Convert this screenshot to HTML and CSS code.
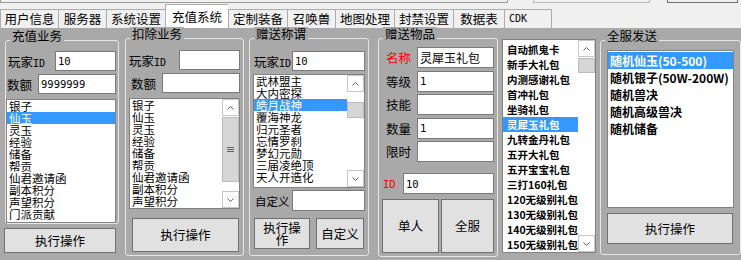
FILE: index.html
```html
<!DOCTYPE html>
<html lang="zh-CN">
<head>
    <meta charset="UTF-8">
    <title>GM工具 - 充值系统</title>
    <link rel="stylesheet" href="styles.css">
</head>
<body>
    <!-- 上方被截掉的控件 -->
    <div class="top-strip">
        <div class="strip-box box-a"></div>
        <div class="strip-box box-b"></div>
        <div class="strip-box box-c"></div>
    </div>

    <!-- 选项卡 -->
    <div class="tabs">
        <div class="tab tab-first">用户信息</div>
        <div class="tab tab-short">服务器</div>
        <div class="tab">系统设置</div>
        <div class="tab tab-active">充值系统</div>
        <div class="tab">定制装备</div>
        <div class="tab tab-short">召唤兽</div>
        <div class="tab">地图处理</div>
        <div class="tab">封禁设置</div>
        <div class="tab tab-mid">数据表</div>
        <div class="tab tab-short tab-last tab-cdk">CDK</div>
    </div>

    <div class="panel">
        <!-- 充值业务 -->
        <div class="col col-recharge">
            <div class="group g-recharge">
                <span class="group-title">充值业务</span>
                <div class="field f-id">
                    <label>玩家<span class="en">ID</span></label>
                    <input type="text" value="10">
                </div>
                <div class="field f-amt">
                    <label>数额</label>
                    <input type="text" value="9999999">
                </div>
                <div class="list">
                    <div class="items">
                        <div class="item">银子</div>
                        <div class="item sel">仙玉</div>
                        <div class="item">灵玉</div>
                        <div class="item">经验</div>
                        <div class="item">储备</div>
                        <div class="item">帮贡</div>
                        <div class="item">仙君邀请函</div>
                        <div class="item">副本积分</div>
                        <div class="item">声望积分</div>
                        <div class="item">门派贡献</div>
                    </div>
                </div>
            </div>
            <button class="btn">执行操作</button>
        </div>

        <!-- 扣除业务 -->
        <div class="col col-deduct">
            <div class="group g-deduct">
                <span class="group-title">扣除业务</span>
                <div class="field f-id">
                    <label>玩家<span class="en">ID</span></label>
                    <input type="text" value="">
                </div>
                <div class="field f-amt">
                    <label>数额</label>
                    <input type="text" value="">
                </div>
                <div class="list">
                    <div class="items">
                        <div class="item">银子</div>
                        <div class="item">仙玉</div>
                        <div class="item">灵玉</div>
                        <div class="item">经验</div>
                        <div class="item">储备</div>
                        <div class="item">帮贡</div>
                        <div class="item">仙君邀请函</div>
                        <div class="item">副本积分</div>
                        <div class="item">声望积分</div>
                    </div>
                    <div class="scroll">
                        <div class="arrow">
                            <svg width="7" height="4" viewBox="0 0 7 4"><polyline points="0.5,3.5 3.5,0.5 6.5,3.5" fill="none" stroke="#606060"/></svg>
                        </div>
                        <div class="thumb thumb-big">
                            <svg width="7" height="5" viewBox="0 0 7 5"><path d="M0 0.5H7M0 2.5H7M0 4.5H7" stroke="#606060"/></svg>
                        </div>
                        <div class="track"></div>
                        <div class="arrow">
                            <svg width="7" height="4" viewBox="0 0 7 4"><polyline points="0.5,0.5 3.5,3.5 6.5,0.5" fill="none" stroke="#606060"/></svg>
                        </div>
                    </div>
                </div>
                <button class="btn">执行操作</button>
            </div>
        </div>

        <!-- 赠送称谓 -->
        <div class="col col-title">
            <div class="group g-title">
                <span class="group-title">赠送称谓</span>
                <div class="field f-id">
                    <label>玩家<span class="en">ID</span></label>
                    <input type="text" value="10">
                </div>
                <div class="list">
                    <div class="items">
                        <div class="item">武林盟主</div>
                        <div class="item">大内密探</div>
                        <div class="item sel">皓月战神</div>
                        <div class="item">覆海神龙</div>
                        <div class="item">归元圣者</div>
                        <div class="item">忘情罗刹</div>
                        <div class="item">梦幻元勋</div>
                        <div class="item">三届凌绝顶</div>
                        <div class="item">天人开造化</div>
                    </div>
                    <div class="scroll">
                        <div class="arrow">
                            <svg width="7" height="4" viewBox="0 0 7 4"><polyline points="0.5,3.5 3.5,0.5 6.5,3.5" fill="none" stroke="#606060"/></svg>
                        </div>
                        <div class="thumb thumb-mid"></div>
                        <div class="track"></div>
                        <div class="arrow">
                            <svg width="7" height="4" viewBox="0 0 7 4"><polyline points="0.5,0.5 3.5,3.5 6.5,0.5" fill="none" stroke="#606060"/></svg>
                        </div>
                    </div>
                </div>
                <div class="field f-custom">
                    <label>自定义</label>
                    <input type="text" value="">
                </div>
                <div class="btn-row">
                    <button class="btn btn-wrap">执行操作</button>
                    <button class="btn btn-custom">自定义</button>
                </div>
            </div>
        </div>

        <!-- 赠送物品 -->
        <div class="col col-item">
            <div class="group g-item">
                <span class="group-title">赠送物品</span>
                <div class="field">
                    <label class="red">名称</label>
                    <input type="text" class="cn" value="灵犀玉礼包">
                </div>
                <div class="field">
                    <label>等级</label>
                    <input type="text" value="1">
                </div>
                <div class="field">
                    <label>技能</label>
                    <input type="text" value="">
                </div>
                <div class="field">
                    <label>数量</label>
                    <input type="text" value="1">
                </div>
                <div class="field">
                    <label>限时</label>
                    <input type="text" value="">
                </div>
                <div class="field f-itemid">
                    <label class="red en">ID</label>
                    <input type="text" value="10">
                </div>
                <div class="btn-row">
                    <button class="btn btn-single">单人</button>
                    <button class="btn btn-server">全服</button>
                </div>
            </div>
        </div>

        <!-- 物品列表 -->
        <div class="list list-gift">
            <div class="items">
                <div class="item">自动抓鬼卡</div>
                <div class="item">新手大礼包</div>
                <div class="item">内测感谢礼包</div>
                <div class="item">首冲礼包</div>
                <div class="item">坐骑礼包</div>
                <div class="item sel">灵犀玉礼包</div>
                <div class="item">九转金丹礼包</div>
                <div class="item">五开大礼包</div>
                <div class="item">五开宝宝礼包</div>
                <div class="item">三打160礼包</div>
                <div class="item">120无级别礼包</div>
                <div class="item">130无级别礼包</div>
                <div class="item">140无级别礼包</div>
                <div class="item">150无级别礼包</div>
            </div>
            <div class="scroll">
                <div class="arrow">
                    <svg width="7" height="4" viewBox="0 0 7 4"><polyline points="0.5,3.5 3.5,0.5 6.5,3.5" fill="none" stroke="#606060"/></svg>
                </div>
                <div class="thumb thumb-small"></div>
                <div class="track"></div>
                <div class="arrow">
                    <svg width="7" height="4" viewBox="0 0 7 4"><polyline points="0.5,0.5 3.5,3.5 6.5,0.5" fill="none" stroke="#606060"/></svg>
                </div>
            </div>
        </div>

        <!-- 全服发送 -->
        <div class="col col-all">
            <div class="group g-all">
                <span class="group-title">全服发送</span>
                <div class="list">
                    <div class="items">
                        <div class="item sel">随机仙玉(50-500)</div>
                        <div class="item">随机银子(50W-200W)</div>
                        <div class="item">随机兽决</div>
                        <div class="item">随机高级兽决</div>
                        <div class="item">随机储备</div>
                    </div>
                </div>
                <button class="btn">执行操作</button>
            </div>
        </div>
    </div>
</body>
</html>
```

FILE: styles.css
```css
* {
    box-sizing: border-box;
}

body {
    margin: 0;
    width: 741px;
    height: 260px;
    overflow: hidden;
    background: #f0f0f0;
    font-family: "Noto Sans CJK SC", sans-serif;
    font-size: 12.5px;
    color: #000;
}

.en {
    font-family: "DejaVu Sans Mono", monospace;
    font-size: 10px;
}

.red {
    color: #ff0000;
}

/* 顶部残留控件 */
.top-strip {
    display: flex;
    height: 4px;
}

.strip-box {
    height: 3px;
    border: 1px solid #9b9b9b;
    border-top: none;
}

.box-a { width: 508px; }
.box-b { width: 117px; margin-left: 25px; border-color: #b6beb6; }
.box-c { width: 71px; margin-left: 17px; border-color: #6e6e6e; }

/* 选项卡 */
.tabs {
    display: flex;
    align-items: flex-end;
    height: 24px;
}

.tab {
    width: 59px;
    height: 19px;
    border: 1px solid #acacac;
    border-right: none;
    border-bottom: none;
    background: #f0f0f0;
    text-align: center;
    line-height: 17px;
    white-space: nowrap;
}

.tab-first { width: 58px; }
.tab-short { width: 48px; }
.tab-mid { width: 51px; }
.tab-last { border-right: 1px solid #acacac; }

.tab-active {
    width: 63px;
    height: 24px;
    padding-top: 3px;
    background: #fff;
}

.tab-cdk {
    text-align: left;
    padding-left: 4px;
    font-family: "DejaVu Sans Mono", monospace;
    font-size: 10px;
}

/* 主面板 */
.panel {
    display: flex;
    align-items: flex-start;
    height: 232px;
    background: #a9a9a9;
}

.col {
    display: flex;
    flex-direction: column;
    align-items: flex-start;
}

.group {
    position: relative;
    border: 1px solid #e6e6e6;
    border-radius: 3px;
}

.group-title {
    position: absolute;
    top: -12px;
    left: 4px;
    padding: 0 2px;
    background: #a9a9a9;
    line-height: 14px;
    white-space: nowrap;
}

.field {
    display: flex;
    align-items: center;
}

.field label {
    white-space: nowrap;
}

.field input {
    margin-left: auto;
}

input {
    height: 20px;
    border: 1px solid #7a7a7a;
    background: #fff;
    padding: 0 2px;
    font-family: "DejaVu Sans Mono", "Noto Sans CJK SC", monospace;
    font-size: 10.5px;
    color: #000;
    outline: none;
}

input.cn {
    font-family: "Noto Sans CJK SC", sans-serif;
    font-size: 12px;
}

.btn {
    background: #e1e1e1;
    border: 1px solid #707070;
    font-family: inherit;
    font-size: 12.5px;
    line-height: 12px;
    color: #000;
    padding: 0;
}

.btn-row {
    display: flex;
}

/* 列表框 */
.list {
    display: flex;
    background: #fff;
    border: 1px solid #828282;
    overflow: hidden;
}

.items {
    flex: 1;
    overflow: hidden;
}

.item {
    height: 12px;
    padding-left: 2px;
    font-size: 11.5px;
    line-height: 12px;
    white-space: nowrap;
}

.item.sel {
    background: #3399ff;
    color: #fff;
}

.scroll {
    width: 17px;
    display: flex;
    flex-direction: column;
}

.arrow {
    height: 17px;
    border: 1px solid #c6c6c6;
    background: #fff;
    display: flex;
    align-items: center;
    justify-content: center;
}

.arrow svg {
    display: block;
}

.thumb {
    border: 1px solid #bcbcbc;
    background: #d6d6d6;
    display: flex;
    align-items: center;
    justify-content: center;
}

.thumb-big { margin-top: 1px; height: 65px; }
.thumb-mid { margin-top: 10px; height: 16px; }
.thumb-small { margin-top: 1px; height: 15px; }

.track {
    flex: 1;
}

/* 充值业务 */
.col-recharge {
    margin: 12px 0 0 4px;
    width: 115px;
}

.g-recharge {
    margin-left: 1px;
    width: 114px;
    height: 184px;
    padding: 10px 2px 0 0;
}

.g-recharge .f-id label { margin-left: 2px; }
.g-recharge .f-id input { width: 61px; }
.g-recharge .f-amt { margin-top: 3px; }
.g-recharge .f-amt label { margin-left: 1px; }
.g-recharge .f-amt input { width: 78px; }

.g-recharge .list {
    margin-top: 5px;
    width: 110px;
    height: 124px;
}

.col-recharge > .btn {
    margin-top: 4px;
    width: 112px;
    height: 25px;
}

/* 扣除业务 */
.col-deduct {
    margin: 10px 0 0 6px;
}

.g-deduct {
    width: 119px;
    height: 218px;
    padding: 11px 3px 0 0;
}

.g-deduct .f-id label { margin-left: 3px; }
.g-deduct .f-id input { width: 61px; }
.g-deduct .f-amt { margin-top: 3px; }
.g-deduct .f-amt label { margin-left: 5px; }
.g-deduct .f-amt input { width: 78px; }

.g-deduct .list {
    margin: 5px 0 0 3px;
    width: 111px;
    height: 111px;
}

.g-deduct > .btn {
    margin: 9px 0 0 6px;
    width: 107px;
    height: 34px;
}

/* 赠送称谓 */
.col-title {
    margin: 10px 0 0 5px;
}

.g-title {
    width: 120px;
    height: 218px;
    padding: 12px 3px 0 0;
}

.g-title .f-id label { margin-left: 4px; }
.g-title .f-id input { width: 73px; }

.g-title .list {
    margin: 3px 0 0 3px;
    width: 112px;
    height: 114px;
}

.g-title .f-custom { margin-top: 2px; }
.g-title .f-custom label { margin-left: 5px; font-size: 11.5px; }
.g-title .f-custom input { width: 73px; height: 21px; }

.g-title .btn-row { margin-top: 7px; }

.btn-wrap {
    margin-left: 4px;
    width: 56px;
    height: 31px;
    padding: 0 5px;
}

.btn-custom {
    margin-left: 6px;
    width: 48px;
    height: 31px;
}

/* 赠送物品 */
.col-item {
    margin: 10px 0 0 9px;
}

.g-item {
    width: 120px;
    height: 219px;
    padding: 8px 3px 0 0;
}

.g-item .field + .field { margin-top: 2.5px; }
.g-item .field label { margin-left: 7px; }
.g-item .field input { width: 77px; height: 21px; }

.g-item .f-itemid { margin-top: 11px !important; }
.g-item .f-itemid label { margin-left: 4px; font-size: 10.5px; }
.g-item .f-itemid input { width: 91px; }

.g-item .btn-row { margin-top: 5px; }

.btn-single {
    margin-left: 3px;
    width: 57px;
    height: 54px;
}

.btn-server {
    margin-left: 2px;
    width: 53px;
    height: 54px;
}

/* 物品列表 */
.list-gift {
    margin: 11px 0 0 4px;
    width: 94px;
    height: 214px;
}

.list-gift .items {
    padding-top: 2px;
}

.list-gift .item {
    height: 15px;
    padding-left: 4px;
    font-size: 10.5px;
    font-weight: 700;
    line-height: 15px;
}

/* 全服发送 */
.col-all {
    margin: 12px 0 0 4px;
}

.g-all {
    width: 141px;
    height: 215px;
    padding: 9px 0 0 6px;
}

.g-all .list {
    width: 127px;
    height: 158px;
}

.g-all .items {
    padding-top: 1px;
}

.g-all .item {
    height: 17px;
    padding-left: 2px;
    font-size: 12px;
    font-weight: 700;
    line-height: 17px;
}

.g-all > .btn {
    margin-top: 5px;
    width: 126px;
    height: 31px;
}
```
